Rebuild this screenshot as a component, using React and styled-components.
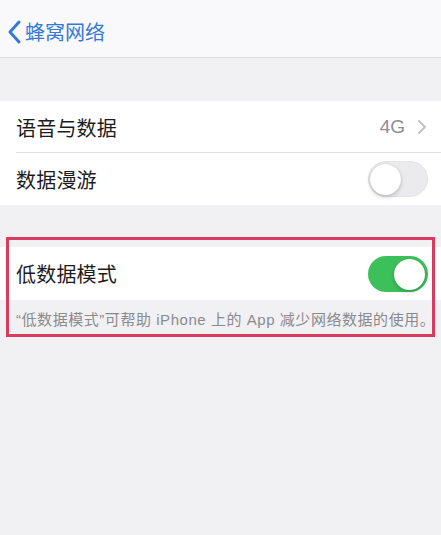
import React from "react";
import styled, { createGlobalStyle } from "styled-components";

const Global = createGlobalStyle`
  html, body { margin: 0; padding: 0; }
  body {
    background: #f1f1f4;
    font-family: "Noto Sans CJK SC", "Noto Sans", sans-serif;
    -webkit-font-smoothing: antialiased;
  }
`;

const Page = styled.div`
  width: 441px;
  min-height: 535px;
  background: #f1f1f4;
  display: flex;
  flex-direction: column;
`;

const NavBar = styled.div`
  height: 58px;
  background: #f9f9fb;
  border-bottom: 1px solid #dcdcdf;
  display: flex;
  align-items: center;
  padding-left: 7px;
  box-sizing: border-box;
`;

const BackButton = styled.div`
  display: flex;
  align-items: center;
  gap: 4px;
  color: #3478d8;
  font-size: 20px;
  line-height: 1;
  margin-top: 7px;
`;

const Group = styled.div`
  position: relative;
  margin-top: ${(p) => p.$top}px;
  display: flex;
  flex-direction: column;
`;

const Row = styled.div`
  height: ${(p) => p.$h || 52}px;
  background: #ffffff;
  display: flex;
  align-items: center;
  padding: 0 14px 0 16px;
  box-sizing: border-box;
  position: relative;
  ${(p) =>
    p.$divider &&
    `&::after {
      content: "";
      position: absolute;
      left: 16px;
      right: 0;
      bottom: 0;
      height: 1px;
      background: #e1e1e4;
    }`}
`;

const Label = styled.span`
  flex: 1;
  font-size: 20px;
  color: #1d1d1f;
  letter-spacing: 0.2px;
`;

const Detail = styled.span`
  font-size: 19px;
  color: #8e8e93;
  font-family: "Liberation Sans", "Noto Sans", sans-serif;
  margin-right: 12px;
`;

const Track = styled.div`
  width: 60px;
  height: 36px;
  border-radius: 18px;
  box-sizing: border-box;
  position: relative;
  background: ${(p) => (p.$on ? "#3cc15a" : "#ebebed")};
  border: ${(p) => (p.$on ? "none" : "1.5px solid #e3e3e6")};
  margin-right: -1px;
`;

const Knob = styled.div`
  position: absolute;
  top: ${(p) => (p.$on ? 3 : 1.5)}px;
  ${(p) => (p.$on ? "right: 3px;" : "left: 1px;")}
  width: 31px;
  height: 31px;
  border-radius: 50%;
  background: #ffffff;
  box-shadow: 0 2px 4px rgba(0, 0, 0, 0.2), 0 0 1px rgba(0, 0, 0, 0.2);
`;

const Footer = styled.div`
  padding: 8px 0 0 16px;
  height: 34px;
  box-sizing: border-box;
  font-family: "Liberation Sans", "Noto Sans CJK SC", sans-serif;
  font-size: 15px;
  color: #8a8a8e;
  white-space: nowrap;
  letter-spacing: 0.55px;
`;

const Highlight = styled.div`
  position: absolute;
  top: -10px;
  left: 6px;
  right: 6px;
  bottom: -3px;
  border: 3px solid #d93a5f;
  pointer-events: none;
`;

const Toggle = ({ on }) => (
  <Track $on={on}>
    <Knob $on={on} />
  </Track>
);

const Chevron = () => (
  <svg width="10" height="16" viewBox="0 0 10 16">
    <path d="M2 2l6 6-6 6" fill="none" stroke="#c4c4c8" strokeWidth="2" strokeLinecap="round" strokeLinejoin="round" />
  </svg>
);

const BackChevron = () => (
  <svg width="14" height="24" viewBox="0 0 14 24">
    <path d="M12 2L3 12l9 10" fill="none" stroke="#3478d8" strokeWidth="3" strokeLinecap="round" strokeLinejoin="round" />
  </svg>
);

export default function App() {
  return (
    <>
      <Global />
      <Page>
        <NavBar>
          <BackButton>
            <BackChevron />
            <span>蜂窝网络</span>
          </BackButton>
        </NavBar>
        <Group $top={43}>
          <Row $divider>
            <Label>语音与数据</Label>
            <Detail>4G</Detail>
            <Chevron />
          </Row>
          <Row>
            <Label>数据漫游</Label>
            <Toggle on={false} />
          </Row>
        </Group>
        <Group $top={42}>
          <Row $h={53}>
            <Label>低数据模式</Label>
            <Toggle on={true} />
          </Row>
          <Footer>“低数据模式”可帮助 iPhone 上的 App 减少网络数据的使用。</Footer>
          <Highlight />
        </Group>
      </Page>
    </>
  );
}
